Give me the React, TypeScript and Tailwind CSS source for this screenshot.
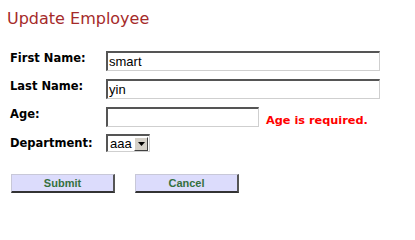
import React from "react";

const label = "w-[96px] shrink-0 text-[11.5px] leading-[13px] font-bold text-black pt-[1px]";
const inputCls =
  "h-[20px] border-t-2 border-l-2 border-b border-r border-t-[#555] border-l-[#555] border-b-[#cfcfcf] border-r-[#cfcfcf] bg-white px-[1px] text-[13px] text-black outline-none [font-family:'Liberation_Sans',Arial,sans-serif]";
const btn =
  "w-[104px] h-[19px] bg-[#dcdcfc] border-t border-l border-t-[#c8c8d8] border-l-[#c8c8d8] border-b-2 border-r-2 border-b-[#333] border-r-[#555] text-[11px] leading-[15px] font-bold text-[#35703f] [font-family:'Liberation_Sans',Arial,sans-serif]";

export default function App() {
  return (
    <div className="w-[415px] h-[212px] bg-white [font-family:'DejaVu_Sans',Verdana,sans-serif] relative">
      <div className="pl-[7px] pt-[9px] text-[16px] leading-[20px] text-[#a52a2a]">Update Employee</div>
      <div className="pl-[10px] pt-[22px] flex flex-col">
        <div className="flex items-start h-[28px]">
          <div className={label}>First Name:</div>
          <input className={`${inputCls} w-[274px]`} defaultValue="smart" />
        </div>
        <div className="flex items-start h-[28px]">
          <div className={label}>Last Name:</div>
          <input className={`${inputCls} w-[274px]`} defaultValue="yin" />
        </div>
        <div className="flex items-start h-[27px]">
          <div className={label}>Age:</div>
          <input className={`${inputCls} w-[153px]`} defaultValue="" />
          <span className="ml-[7px] mt-[7px] text-[11.3px] leading-[14px] font-bold text-[#ff0000]">Age is required.</span>
        </div>
        <div className="flex items-start h-[40px]">
          <div className={`${label} pt-[3px]`}>Department:</div>
          <div className="flex items-center h-[18px] w-[44px] border-t-2 border-l-2 border-b border-r border-t-[#555] border-l-[#555] border-b-[#cfcfcf] border-r-[#cfcfcf] bg-white">
            <span className="flex-1 pl-[2px] text-[13px] leading-[14px] text-black [font-family:'Liberation_Sans',Arial,sans-serif]">aaa</span>
            <span className="w-[14px] h-[14px] mr-[1px] bg-[#d4d0c8] border-t border-l border-t-white border-l-white border-b border-r border-b-[#404040] border-r-[#404040] flex items-center justify-center">
              <svg width="7" height="4" viewBox="0 0 7 4"><path d="M0 0H7L3.5 4Z" fill="#000" /></svg>
            </span>
          </div>
        </div>
        <div className="flex pl-[1px] gap-[20px]">
          <button className={btn}>Submit</button>
          <button className={btn}>Cancel</button>
        </div>
      </div>
    </div>
  );
}
